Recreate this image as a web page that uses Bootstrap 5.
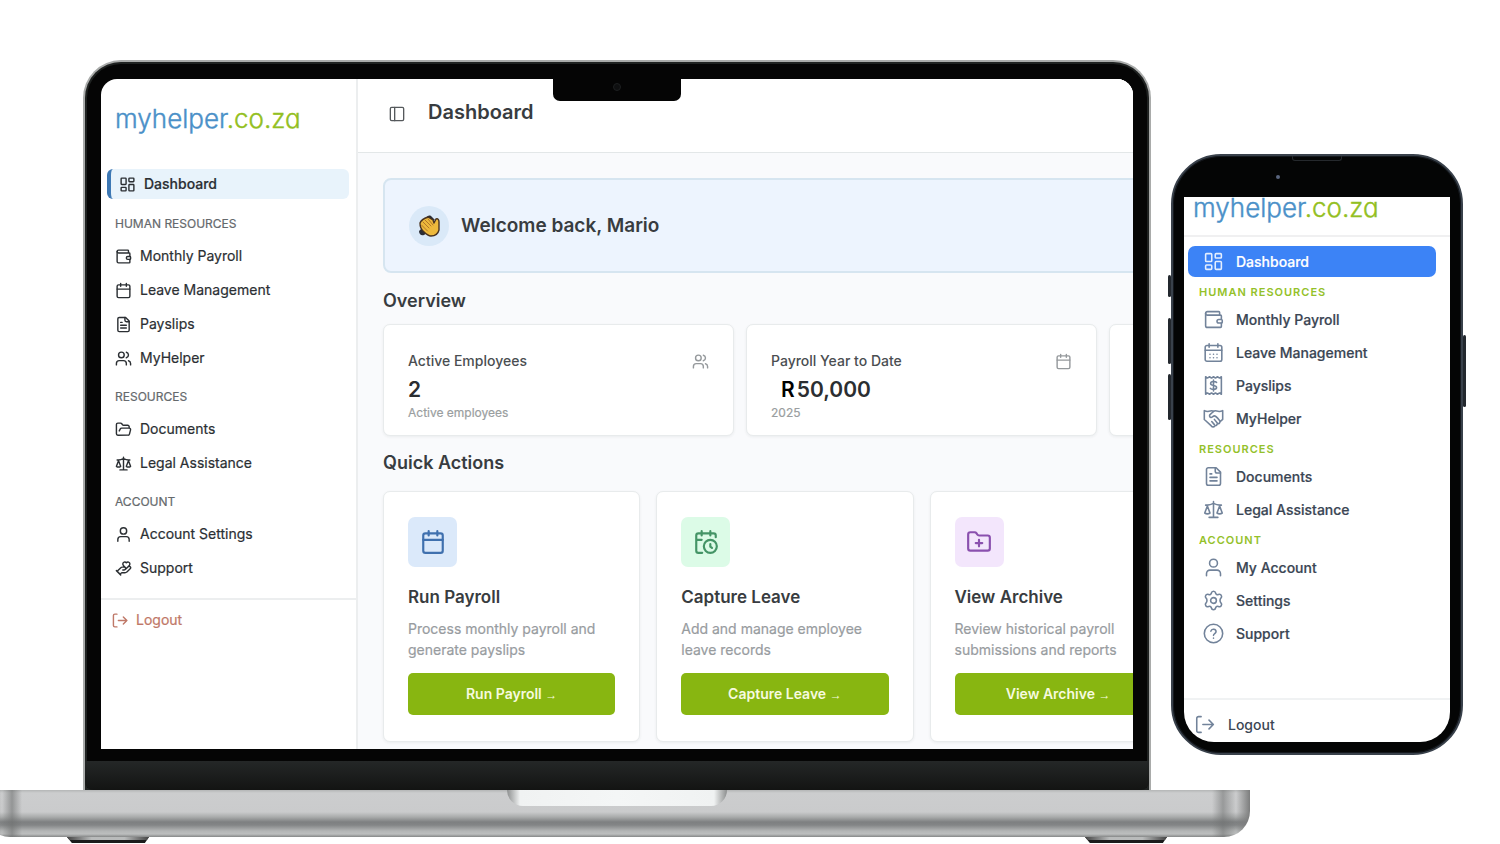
<!DOCTYPE html>
<html lang="en">
<head>
<meta charset="utf-8">
<meta name="viewport" content="width=device-width, initial-scale=1">
<title>myhelper.co.za</title>
<link href="https://cdn.jsdelivr.net/npm/bootstrap@5.3.0/dist/css/bootstrap.min.css" rel="stylesheet">
<style>
  body { font-family: Inter, "Liberation Sans", sans-serif; background: #fff; overflow-x: hidden; color: #2b2f33; }
  a { text-decoration: none; color: inherit; }
  .ico { width: 17px; height: 17px; flex: none; fill: none; stroke: currentColor; stroke-width: 2; stroke-linecap: round; stroke-linejoin: round; }
  .brand { font-weight: 300; font-size: 26px; line-height: 36px; color: #4a90c8; font-feature-settings: "cv11"; -webkit-text-stroke: 0.4px currentColor; white-space: nowrap; }
  .brand span { color: #93bf22; }

  .devices { padding: 60px 34px 0 83px; gap: 17px; }

  /* laptop */
  .lid { min-width: 0; border: 2px solid #a9abaa; border-bottom: 0; border-radius: 38px 38px 0 0; background: #050505; box-shadow: inset 0 0 0 2px #1f2221; overflow: hidden; padding-top: 17px; }
  .screen { margin: 0 16px; background: #fff; border-radius: 16px 16px 0 0; overflow: hidden; position: relative; }
  .notch { position: absolute; top: 0; left: 50%; margin-left: -64px; width: 128px; height: 22px; background: #050505; border-radius: 0 0 7px 7px; }
  .lens { width: 8px; height: 8px; border-radius: 50%; background: #0e0f10; border: 1px solid #1d1f20; margin: 4px auto; }
  .chin { margin-top: 12px; height: 29px; background: linear-gradient(#242727, #131413); border-radius: 0 0 8px 8px; }

  .side { width: 257px; border-right: 2px solid #eceeef; padding-top: 22px; }
  .side .brand { padding-left: 14px; }
  .side-top { height: 68px; }
  .side-link { height: 34px; padding-left: 14px; gap: 8px; font-size: 14px; line-height: 20px; -webkit-text-stroke: 0.2px currentColor; }
  .side-link.current { height: 30px; margin: 0 7px 10px 6px; padding-left: 8px; border-left: 4px solid #3d78b4; border-radius: 6px; background: #e8f3fb; font-weight: 500; }
  .side-head { margin: 7px 0 0; padding-left: 14px; font-size: 12px; line-height: 30px; font-weight: 400; color: #65696c; -webkit-text-stroke: 0.2px currentColor; }
  .side-out { margin-top: 13px; border-top: 2px solid #eceeef; padding: 10px 0 0 11px; gap: 7px; font-size: 14px; line-height: 20px; color: #bf7868; -webkit-text-stroke: 0.2px currentColor; }

  .main { min-width: 0; overflow: hidden; background: #f9fafc; }
  .topbar { height: 74px; background: #fff; border-bottom: 1px solid #e3e7e8; padding: 0 0 8px 31px; gap: 23px; }
  .topbar button { width: 16px; height: 16px; border: 0; padding: 0; background: none; display: flex; color: #55595c; margin-top: 4px; }
  .topbar button .ico { width: 16px; height: 16px; }
  h1, h2, h3 { margin: 0; font-weight: 600; color: #383c40; }
  h1 { font-size: 20px; line-height: 28px; }
  .content { padding: 25px 0 7px 25px; }
  .hello { height: 95px; margin-right: -40px; padding-left: 24px; gap: 12px; background: #edf4fe; border: 2px solid #d6e5f0; border-radius: 8px; }
  .hello h2 { font-size: 19px; line-height: 28px; }
  .hello-mark { width: 40px; height: 40px; border-radius: 50%; background: #dae9f8; }
  .block-title { font-size: 18px; line-height: 24px; }
  .tile { background: #fff; border: 1px solid #e8ebec; border-radius: 7px; box-shadow: 0 1px 3px rgba(40,50,60,.07); flex-shrink: 0; }
  .tiles-a { gap: 12px; margin: 11px 0 15px; }
  .tiles-a .tile { width: 46.8%; height: 112px; padding: 26px 24px 0; }
  .tiles-b { gap: 16px; margin-top: 16px; }
  .tiles-b .tile { width: 34.3%; padding: 25px 24px 26px; }
  .t-label { font-size: 14px; line-height: 20px; font-weight: 500; color: #4a4e51; }
  .t-value { font-size: 21px; line-height: 38px; font-weight: 600; color: #2b2e31; }
  .t-money { padding-left: 10px; gap: 2px; }
  .t-money span { color: #000; }
  .t-note { font-size: 12px; line-height: 8px; color: #9a9ea0; -webkit-text-stroke: 0.2px currentColor; }
  .muted-ico { color: #95999c; }
  .chip { width: 49px; height: 50px; border-radius: 7px; }
  .chip .ico { width: 26px; height: 26px; }
  .chip-blue { background: #dbe9fa; color: #3f70ae; }
  .chip-green { background: #dcfbe7; color: #449466; }
  .chip-violet { background: #f3e6fc; color: #8a50ae; }
  .tiles-b h3 { font-size: 17px; line-height: 24px; margin: 18px 0 9px; }
  .tiles-b p { font-size: 14px; line-height: 21px; margin: 0 0 13px; color: #989c9f; -webkit-text-stroke: 0.2px currentColor; }
  .go { height: 42px; border: 0; border-radius: 5px; background: #88b611; color: #f6fadf; font-size: 14px; font-weight: 600; line-height: 20px; padding: 0; }
  .go span { font: 12px "Liberation Sans", sans-serif; }
  .go:hover { background: #7aa60c; color: #fff; }

  .deck { margin: 0 250px 0 -16px; }
  .slab { height: 47px; border-radius: 2px 0 26px 26px;
    background: linear-gradient(90deg, #9a9b9b 0, rgba(210,211,211,0) 18px, rgba(110,112,112,.6) 28px, rgba(200,200,200,0) 38px, rgba(200,200,200,0) calc(100% - 38px), rgba(110,112,112,.55) calc(100% - 27px), rgba(210,211,211,0) calc(100% - 14px), #7c7d7d 100%),
      linear-gradient(#b4b6b6 0, #cccdce 3px, #cacbcc 22px, #a9abab 27px, #7e8081 32px, #838586 35px, #b4b6b6 41px, #bcbebe 44px, #858787 47px); }
  .scoop { width: 220px; height: 16px; margin: auto; border-radius: 0 0 16px 16px; background: linear-gradient(90deg, #8d8f8f 0, #f0f2f2 13px, #f4f6f6 50%, #f0f2f2 calc(100% - 13px), #8d8f8f 100%); }
  .feet { padding: 0 83px; height: 7px; }
  .foot { width: 82px; height: 6px; clip-path: polygon(0 0, 100% 0, 95% 100%, 6% 100%); background: linear-gradient(90deg, #444 0, #b9bbbb 30%, #b9bbbb 70%, #444 100%) 0 0 / 100% 3px no-repeat, #1b1c1c; }

  /* phone */
  .phone { width: 298px; margin-bottom: 35px; }
  .keys { width: 3px; }
  .keys i { display: block; background: #23282e; border-radius: 2px; }
  .keys .k-s { height: 22px; margin: 121px 0 21px; }
  .keys .k-m { height: 46px; margin-bottom: 10px; }
  .keys .k-l { height: 72px; margin-top: 181px; }
  .case { min-width: 0; background: #040505; border: 2px solid #39414b; border-radius: 50px; box-shadow: inset 0 0 0 1px #15191e; padding: 0 11px 11px; }
  .earpiece { height: 41px; }
  .slot { width: 50px; height: 5px; border: 1px solid #25292d; border-top: 0; border-radius: 0 0 3px 3px; margin: 0 auto 14px; }
  .cam { width: 4px; height: 4px; border-radius: 50%; background: #59657e; margin-left: 92px; }
  .view { background: #fff; border-radius: 0 0 30px 30px; overflow: hidden; color: #3b4654; font-size: 14px; font-weight: 500; }
  .view-top { height: 40px; border-bottom: 2px solid #f0f0f1; padding-left: 9px; }
  .view-top .brand { line-height: 22px; }
  .ph-link { height: 33px; padding-left: 19px; gap: 12px; line-height: 20px; -webkit-text-stroke: 0.2px currentColor; }
  .ph-link .ico, .ph-out .ico { width: 21px; height: 21px; stroke-width: 1.8; color: #72839a; }
  .ph-link.current { height: 31px; margin: 9px 14px 1px 4px; padding-left: 15px; border-radius: 7px; background: #3c83f6; color: #fff; }
  .ph-link.current .ico { color: #e4eefe; }
  .ph-head { margin: 0; padding: 4px 0 1px 15px; font-size: 11px; line-height: 20px; font-weight: 600; letter-spacing: 1px; color: #94c12a; }
  .ph-out { margin-top: 48px; border-top: 2px solid #f0f2f3; padding: 14px 0 7px 11px; gap: 12px; line-height: 20px; }
</style>
</head>
<body>
<svg width="0" height="0" class="d-none" aria-hidden="true">
  <symbol id="i-dash" viewBox="0 0 24 24"><rect x="3" y="3" width="7" height="9" rx="1"/><rect x="14" y="3" width="7" height="5" rx="1"/><rect x="14" y="12" width="7" height="9" rx="1"/><rect x="3" y="16" width="7" height="5" rx="1"/></symbol>
  <symbol id="i-wallet" viewBox="0 0 24 24"><path d="M19 7V4a1 1 0 0 0-1-1H5a2 2 0 0 0 0 4h15a1 1 0 0 1 1 1v4h-3a2 2 0 0 0 0 4h3a1 1 0 0 0 1-1v-2a1 1 0 0 0-1-1"/><path d="M3 5v14a2 2 0 0 0 2 2h15a1 1 0 0 0 1-1v-4"/></symbol>
  <symbol id="i-cal" viewBox="0 0 24 24"><path d="M8 2v4M16 2v4M3 10h18"/><rect x="3" y="4" width="18" height="18" rx="2"/></symbol>
  <symbol id="i-days" viewBox="0 0 24 24"><path d="M7 2v4M17 2v4M2.500 9.500h19M8 14h.01M12 14h.01M16 14h.01M8 18h.01M12 18h.01M16 18h.01"/><rect x="2.500" y="4" width="19" height="18" rx="2"/></symbol>
  <symbol id="i-clock" viewBox="0 0 24 24"><path d="M21 7.500V6a2 2 0 0 0-2-2H5a2 2 0 0 0-2 2v14a2 2 0 0 0 2 2h3.500M16 2v4M8 2v4M3 10h5M17.500 17.500 16 16.300V14"/><circle cx="16" cy="16" r="6"/></symbol>
  <symbol id="i-file" viewBox="0 0 24 24"><path d="M15 2H6a2 2 0 0 0-2 2v16a2 2 0 0 0 2 2h12a2 2 0 0 0 2-2V7z"/><path d="M14 2v4a2 2 0 0 0 2 2h4M10 9H8M16 13H8M16 17H8"/></symbol>
  <symbol id="i-users" viewBox="0 0 24 24"><path d="M16 21v-2a4 4 0 0 0-4-4H6a4 4 0 0 0-4 4v2"/><circle cx="9" cy="7" r="4"/><path d="M22 21v-2a4 4 0 0 0-3-3.870M16 3.130a4 4 0 0 1 0 7.750"/></symbol>
  <symbol id="i-open" viewBox="0 0 24 24"><path d="m6 14 1.500-2.900A2 2 0 0 1 9.240 10H20a2 2 0 0 1 1.940 2.500l-1.540 6a2 2 0 0 1-1.950 1.500H4a2 2 0 0 1-2-2V5a2 2 0 0 1 2-2h3.900a2 2 0 0 1 1.690.9l.81 1.200a2 2 0 0 0 1.670.9H18a2 2 0 0 1 2 2v2"/></symbol>
  <symbol id="i-plus" viewBox="0 0 24 24"><path d="M12 10v6M9 13h6M20 20a2 2 0 0 0 2-2V8a2 2 0 0 0-2-2h-7.900a2 2 0 0 1-1.690-.9L9.600 3.900A2 2 0 0 0 7.930 3H4a2 2 0 0 0-2 2v13a2 2 0 0 0 2 2Z"/></symbol>
  <symbol id="i-scale" viewBox="0 0 24 24"><path d="m16 16 3-8 3 8c-.87.65-1.920 1-3 1s-2.130-.35-3-1ZM2 16l3-8 3 8c-.87.65-1.920 1-3 1s-2.130-.35-3-1ZM7 21h10M12 3v18M3 7h2c2 0 5-1 7-2 2 1 5 2 7 2h2"/></symbol>
  <symbol id="i-user" viewBox="0 0 24 24"><circle cx="12" cy="7" r="4.500"/><path d="M20 21.500V19a4 4 0 0 0-4-4H8a4 4 0 0 0-4 4v2.500"/></symbol>
  <symbol id="i-care" viewBox="0 0 24 24"><path d="M11 14h2a2 2 0 1 0 0-4h-3c-.6 0-1.100.2-1.400.6L3 16M7 20l1.600-1.400c.3-.4.8-.6 1.400-.6h4c1.100 0 2.100-.4 2.800-1.200l4.600-4.400a2 2 0 0 0-2.750-2.910l-4.200 3.900M2 15l6 6M19.500 8.500c.7-.7 1.500-1.600 1.500-2.700A2.730 2.730 0 0 0 16 4a2.780 2.780 0 0 0-5 1.800c0 1.200.8 2 1.500 2.800L16 12z"/></symbol>
  <symbol id="i-out" viewBox="0 0 24 24"><path d="M7 21H4a2 2 0 0 1-2-2V5a2 2 0 0 1 2-2h3M16 17l5-5-5-5M21 12H9"/></symbol>
  <symbol id="i-panel" viewBox="0 0 24 24"><rect x="2" y="2" width="20" height="20" rx="2"/><path d="M8.500 2v20"/></symbol>
  <symbol id="i-bill" viewBox="0 0 24 24"><path d="M3 2v20l2-1.500L7.500 22l2.250-1.500L12 22l2.250-1.500L16.500 22l2.500-1.500 2 1.500V2l-2 1.500L16.500 2l-2.250 1.500L12 2 9.750 3.500 7.500 2 5 3.500z"/><path d="M15.500 8.500C15 7.600 13.800 7.500 12 7.500c-2 0-3.300.7-3.300 2.200 0 3.300 6.800 1.300 6.800 4.600 0 1.600-1.500 2.200-3.500 2.200-1.800 0-3-.2-3.600-1.200M12 5.800v12.400"/></symbol>
  <symbol id="i-shake" viewBox="0 0 24 24"><path d="M1.500 3c2.500 1.200 4.800 1.200 7 .3 1.200-.4 2.500-.3 3.500.5 1-.8 2.300-.9 3.500-.5 2.200.9 4.500.9 7-.3v10l-3 2.500c-.4 2-2 2.600-3 2.500-.6 2-2 2.400-3 2.300-1 1.800-3 1.500-4 .2l-7-6.500-1-1z"/><path d="M12 4 8 7.500c-1 1-.5 3 1 3.300 1.500.3 2.500-1.800 4-1.800 2 0 4 3 6.500 6M13 13l3.500 4.500M10 15.500l3 3.500"/></symbol>
  <symbol id="i-gear" viewBox="0 0 24 24"><path d="M12 1.500c1.500 0 2.200.8 2.500 2.200.3 1.300 1.700 2 3 1.500 1.500-.6 2.700-.3 3.400 1 .8 1.300.5 2.400-.6 3.400-1.100 1-1.100 3.800 0 4.800s1.400 2.100.6 3.400c-.7 1.300-1.900 1.600-3.400 1-1.300-.5-2.700.2-3 1.500-.3 1.400-1 2.200-2.500 2.200s-2.200-.8-2.500-2.200c-.3-1.300-1.700-2-3-1.500-1.500.6-2.700.3-3.400-1-.8-1.300-.5-2.400.6-3.400s1.100-3.800 0-4.800-1.400-2.100-.6-3.400c.7-1.300 1.900-1.600 3.400-1 1.300.5 2.700-.2 3-1.500.3-1.400 1-2.200 2.500-2.200z"/><circle cx="12" cy="12" r="3.300"/></symbol>
  <symbol id="i-help" viewBox="0 0 24 24"><circle cx="12" cy="12" r="10.500"/><path d="M9 9.300a3 3 0 0 1 5.900.8c0 1.900-2.900 2.300-2.900 4M12 17.300h.01"/></symbol>
</svg>

<div class="devices d-flex align-items-end">
  <section class="lid flex-grow-1" aria-label="Laptop">
    <div class="screen d-flex">
      <div class="notch"><div class="lens"></div></div>
      <nav class="side flex-shrink-0">
        <div class="side-top"><a href="#" class="brand d-block">myhelper<span>.co.za</span></a></div>
        <a href="#" class="side-link current d-flex align-items-center"><svg class="ico"><use href="#i-dash"/></svg>Dashboard</a>
        <h2 class="side-head">HUMAN RESOURCES</h2>
        <a href="#" class="side-link d-flex align-items-center"><svg class="ico"><use href="#i-wallet"/></svg>Monthly Payroll</a>
        <a href="#" class="side-link d-flex align-items-center"><svg class="ico"><use href="#i-cal"/></svg>Leave Management</a>
        <a href="#" class="side-link d-flex align-items-center"><svg class="ico"><use href="#i-file"/></svg>Payslips</a>
        <a href="#" class="side-link d-flex align-items-center"><svg class="ico"><use href="#i-users"/></svg>MyHelper</a>
        <h2 class="side-head">RESOURCES</h2>
        <a href="#" class="side-link d-flex align-items-center"><svg class="ico"><use href="#i-open"/></svg>Documents</a>
        <a href="#" class="side-link d-flex align-items-center"><svg class="ico"><use href="#i-scale"/></svg>Legal Assistance</a>
        <h2 class="side-head">ACCOUNT</h2>
        <a href="#" class="side-link d-flex align-items-center"><svg class="ico"><use href="#i-user"/></svg>Account Settings</a>
        <a href="#" class="side-link d-flex align-items-center"><svg class="ico"><use href="#i-care"/></svg>Support</a>
        <a href="#" class="side-out d-flex align-items-center"><svg class="ico"><use href="#i-out"/></svg>Logout</a>
      </nav>
      <main class="main flex-grow-1">
        <header class="topbar d-flex align-items-center">
          <button type="button" aria-label="Toggle sidebar"><svg class="ico"><use href="#i-panel"/></svg></button>
          <h1>Dashboard</h1>
        </header>
        <div class="content">
          <div class="hello d-flex align-items-center">
            <div class="hello-mark d-flex align-items-center justify-content-center">
              <svg width="24" height="24" viewBox="0 0 24 24" aria-hidden="true">
                <path d="M9 4c1-2 3-3 5-2l4 4-5 2zM2 17l3-3 5 5-3 2c-3 1-5-1-5-4z" fill="#2b2d35"/>
                <path d="M3 9c1-3 5-5 8-6l5 3 1 3 2-4c2-1 3 1 3 3v8c-1 4-4 6-8 6-3 0-6-3-8-5-3-3-3-6-3-8z" fill="#edb93c" stroke="#4a3420" stroke-width="1.400" stroke-linejoin="round"/>
                <path d="M6 8l6 6M8 6l6 6M11 5l5 6M4.500 11l6 6" stroke="#b4762a" stroke-width="1" stroke-linecap="round"/>
              </svg>
            </div>
            <h2>Welcome back, Mario</h2>
          </div>
          <h2 class="block-title mt-3">Overview</h2>
          <div class="tiles-a d-flex">
            <div class="tile">
              <div class="d-flex justify-content-between align-items-center"><span class="t-label">Active Employees</span><svg class="ico muted-ico"><use href="#i-users"/></svg></div>
              <div class="t-value">2</div>
              <div class="t-note">Active employees</div>
            </div>
            <div class="tile">
              <div class="d-flex justify-content-between align-items-center"><span class="t-label">Payroll Year to Date</span><svg class="ico muted-ico"><use href="#i-cal"/></svg></div>
              <div class="t-value t-money d-flex"><span>R</span> 50,000</div>
              <div class="t-note">2025</div>
            </div>
            <div class="tile"></div>
          </div>
          <h2 class="block-title">Quick Actions</h2>
          <div class="tiles-b d-flex">
            <div class="tile">
              <div class="chip chip-blue d-flex align-items-center justify-content-center"><svg class="ico"><use href="#i-cal"/></svg></div>
              <h3>Run Payroll</h3>
              <p>Process monthly payroll and generate payslips</p>
              <button type="button" class="btn go w-100">Run Payroll <span>→</span></button>
            </div>
            <div class="tile">
              <div class="chip chip-green d-flex align-items-center justify-content-center"><svg class="ico"><use href="#i-clock"/></svg></div>
              <h3>Capture Leave</h3>
              <p>Add and manage employee leave records</p>
              <button type="button" class="btn go w-100">Capture Leave <span>→</span></button>
            </div>
            <div class="tile">
              <div class="chip chip-violet d-flex align-items-center justify-content-center"><svg class="ico"><use href="#i-plus"/></svg></div>
              <h3>View Archive</h3>
              <p>Review historical payroll submissions and reports</p>
              <button type="button" class="btn go w-100">View Archive <span>→</span></button>
            </div>
          </div>
        </div>
      </main>
    </div>
    <div class="chin"></div>
  </section>

  <section class="phone d-flex flex-shrink-0" aria-label="Phone">
    <div class="keys"><i class="k-s"></i><i class="k-m"></i><i class="k-m"></i></div>
    <div class="case flex-grow-1">
      <div class="earpiece"><div class="slot"></div><div class="cam"></div></div>
      <div class="view">
        <div class="view-top"><a href="#" class="brand d-block">myhelper<span>.co.za</span></a></div>
        <nav>
          <a href="#" class="ph-link current d-flex align-items-center"><svg class="ico"><use href="#i-dash"/></svg>Dashboard</a>
          <h2 class="ph-head">HUMAN RESOURCES</h2>
          <a href="#" class="ph-link d-flex align-items-center"><svg class="ico"><use href="#i-wallet"/></svg>Monthly Payroll</a>
          <a href="#" class="ph-link d-flex align-items-center"><svg class="ico"><use href="#i-days"/></svg>Leave Management</a>
          <a href="#" class="ph-link d-flex align-items-center"><svg class="ico"><use href="#i-bill"/></svg>Payslips</a>
          <a href="#" class="ph-link d-flex align-items-center"><svg class="ico"><use href="#i-shake"/></svg>MyHelper</a>
          <h2 class="ph-head">RESOURCES</h2>
          <a href="#" class="ph-link d-flex align-items-center"><svg class="ico"><use href="#i-file"/></svg>Documents</a>
          <a href="#" class="ph-link d-flex align-items-center"><svg class="ico"><use href="#i-scale"/></svg>Legal Assistance</a>
          <h2 class="ph-head">ACCOUNT</h2>
          <a href="#" class="ph-link d-flex align-items-center"><svg class="ico"><use href="#i-user"/></svg>My Account</a>
          <a href="#" class="ph-link d-flex align-items-center"><svg class="ico"><use href="#i-gear"/></svg>Settings</a>
          <a href="#" class="ph-link d-flex align-items-center"><svg class="ico"><use href="#i-help"/></svg>Support</a>
        </nav>
        <a href="#" class="ph-out d-flex align-items-center"><svg class="ico"><use href="#i-out"/></svg>Logout</a>
      </div>
    </div>
    <div class="keys"><i class="k-l"></i></div>
  </section>
</div>

<div class="deck">
  <div class="slab"><div class="scoop"></div></div>
  <div class="feet d-flex justify-content-between"><div class="foot"></div><div class="foot"></div></div>
</div>
<script src="https://cdn.jsdelivr.net/npm/bootstrap@5.3.0/dist/js/bootstrap.bundle.min.js"></script>
</body>
</html>
